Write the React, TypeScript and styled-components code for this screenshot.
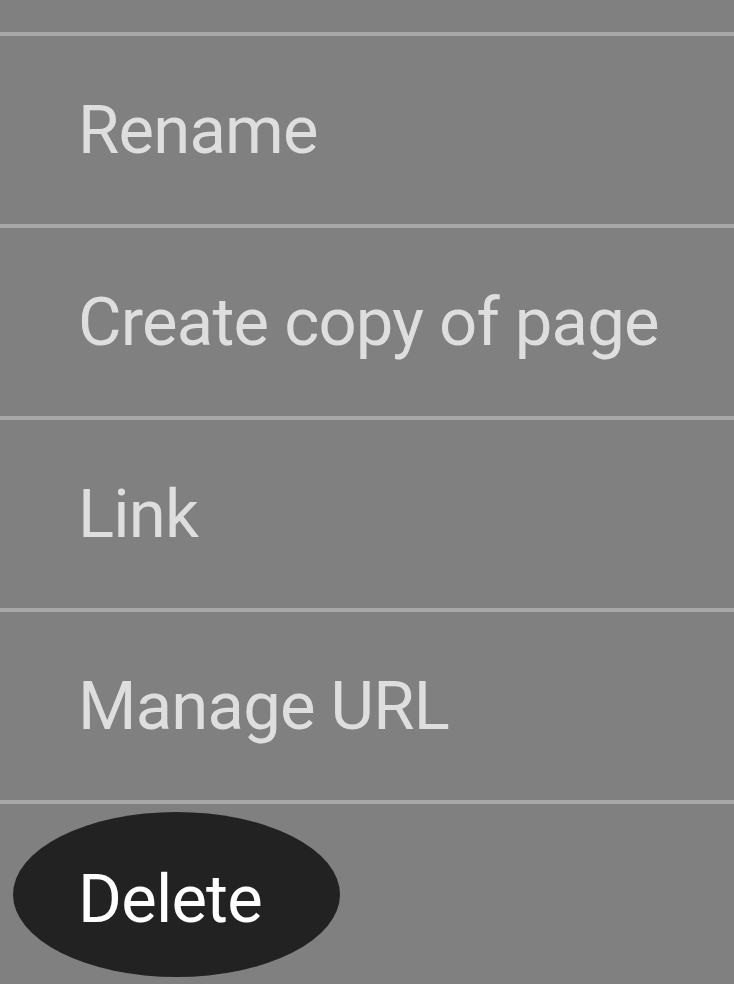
import React from "react";
import styled, { createGlobalStyle } from "styled-components";

const GlobalStyle = createGlobalStyle`
  html, body {
    margin: 0;
    padding: 0;
    background: #808080;
    overflow: hidden;
  }
`;

const items = ["Rename", "Create copy of page", "Link", "Manage URL"];

const App = () => {
  return (
    <Menu>
      <GlobalStyle />
      <TopGap />
      {items.map((item) => (
        <Row key={item}>
          <Label>{item}</Label>
        </Row>
      ))}
      <Row>
        <Highlight>
          <Label $active>Delete</Label>
        </Highlight>
      </Row>
    </Menu>
  );
};

const Menu = styled.div`
  width: 734px;
  height: 984px;
  background: #808080;
  display: flex;
  flex-direction: column;
  font-family: Roboto, "Liberation Sans", sans-serif;
  overflow: hidden;
`;

const TopGap = styled.div`
  height: 32px;
  flex-shrink: 0;
`;

const Row = styled.div`
  flex-shrink: 0;
  height: 188px;
  border-top: 4px solid #a8a8a8;
  display: flex;
  align-items: center;
  padding-left: 78px;
`;

const Label = styled.span<{ $active?: boolean }>`
  font-size: 67px;
  line-height: 1;
  letter-spacing: -0.8px;
  color: ${({ $active }) => ($active ? "#ffffff" : "#dedede")};
`;

const Highlight = styled.div`
  margin-left: -65px;
  margin-top: -8px;
  width: 327px;
  height: 165px;
  border-radius: 50%;
  background: #222222;
  display: flex;
  align-items: center;
  padding-left: 65px;
  padding-top: 10px;
  box-sizing: border-box;
`;

export default App;
